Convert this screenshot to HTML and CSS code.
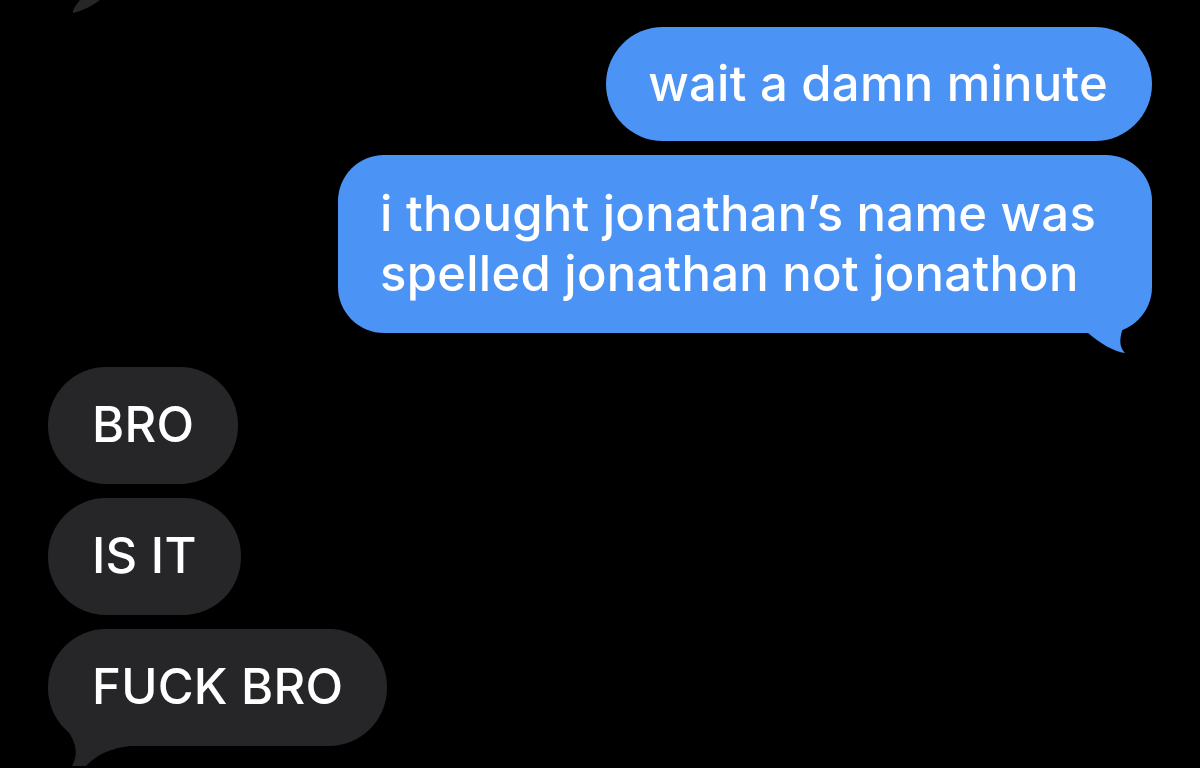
FILE: index.html
```html
<!DOCTYPE html>
<html lang="en">
<head>
    <meta charset="UTF-8">
    <meta name="viewport" content="width=device-width, initial-scale=1.0">
    <title>Messages</title>
    <link rel="stylesheet" href="styles.css">
</head>
<body>
    <div class="chat">
        <!-- хвостик от сообщения выше, обрезан краем -->
        <svg class="prev-tail" width="40" height="16" viewBox="0 0 40 16">
            <path d="M10 0 H30 C22 6 12 11 3 13 C2 10 6 5 10 0 Z" fill="#262628"/>
        </svg>

        <div class="msg out">wait a damn minute</div>
        <div class="msg out multi">
            i thought jonathan’s name was spelled jonathan not jonathon
            <svg class="tail tail-out" width="64" height="64" viewBox="0 0 64 64">
                <path d="M0 0 H59 C59 16 42 24 38 38 C35 48 36 55 41 60 C30 59 16 50 4 40 Z" fill="#4b93f5"/>
            </svg>
        </div>

        <div class="msg in first">BRO</div>
        <div class="msg in">IS IT</div>
        <div class="msg in">
            FUCK BRO
            <svg class="tail tail-in" width="84" height="48" viewBox="0 0 84 48">
                <path d="M18 10 H82 V28 C62 30 47 38 38 48 H24 C28 40 30 32 24 20 C22 16 20 13 18 10 Z" fill="#262628"/>
            </svg>
        </div>
    </div>
</body>
</html>
```

FILE: styles.css
```css
body {
    margin: 0;
    background-color: #000;
    font-family: "Inter", "Roboto", sans-serif;
    height: 100vh;
    overflow: hidden;
}

.chat {
    position: relative;
    display: flex;
    flex-direction: column;
    gap: 14px;
    padding: 27px 48px 0 48px;
}

.msg {
    position: relative;
    box-sizing: border-box;
    max-width: 814px;
    border-radius: 58px;
    font-size: 49px;
    font-weight: 500;
    letter-spacing: 0.25px;
    line-height: 60px;
    color: #fff;
}

.msg.out {
    align-self: flex-end;
    background-color: #4b93f5;
    padding: 27px 44px 27px 42px;
}

.msg.out.multi {
    padding-top: 29px;
    padding-bottom: 29px;
    border-radius: 46px;
}

.msg.in {
    align-self: flex-start;
    background-color: #262628;
    padding: 28px 44px 29px 44px;
}

.msg.first {
    margin-top: 20px;
}

.tail {
    position: absolute;
}

.tail-out {
    right: 4px;
    bottom: -24px;
}

.tail-in {
    left: 0;
    bottom: -20px;
}

.prev-tail {
    position: absolute;
    top: 0;
    left: 70px;
}
```
